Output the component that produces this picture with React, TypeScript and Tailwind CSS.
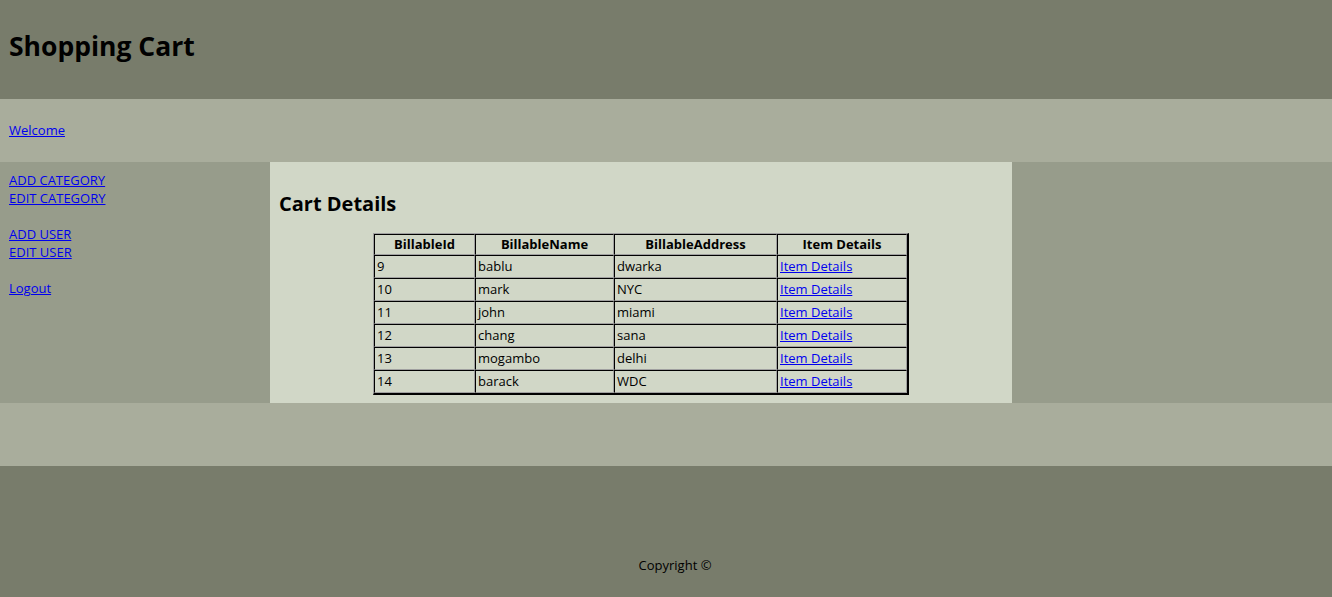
const rows = [
  { id: '9', name: 'bablu', address: 'dwarka' },
  { id: '10', name: 'mark', address: 'NYC' },
  { id: '11', name: 'john', address: 'miami' },
  { id: '12', name: 'chang', address: 'sana' },
  { id: '13', name: 'mogambo', address: 'delhi' },
  { id: '14', name: 'barack', address: 'WDC' },
];

const cell =
  'border border-t-black border-l-black border-r-[#a0a0a0] border-b-[#a0a0a0] px-[2px]';

export default function App() {
  return (
    <div className="w-[1332px] min-h-[597px] text-[13px] text-black font-['Open_Sans',sans-serif]">
      {/* Header */}
      <div className="h-[99px] bg-[#787c6b] flex items-center px-[9px] pb-[5px]">
        <h1 className="text-[26.5px] font-bold">Shopping Cart</h1>
      </div>

      {/* Nav */}
      <div className="h-[63px] bg-[#a9ad9c] flex items-center px-[9px] pt-[1px]">
        <a href="#" className="text-[#0000ee] underline">Welcome</a>
      </div>

      {/* Main */}
      <div className="flex h-[241px]">
        <div className="w-[270px] bg-[#979c8b] px-[9px] pt-[9px] leading-[18px] flex flex-col">
          <a href="#" className="text-[#0000ee] underline self-start">ADD CATEGORY</a>
          <a href="#" className="text-[#0000ee] underline self-start">EDIT CATEGORY</a>
          <div className="h-[18px]" />
          <a href="#" className="text-[#0000ee] underline self-start">ADD USER</a>
          <a href="#" className="text-[#0000ee] underline self-start">EDIT USER</a>
          <div className="h-[18px]" />
          <a href="#" className="text-[#0000ee] underline self-start">Logout</a>
        </div>

        <div className="w-[742px] bg-[#d1d7c7] px-[9px]">
          <h2 className="text-[20px] font-bold mt-[29px] mb-[16px] leading-[26px]">Cart Details</h2>
          <table className="mx-auto w-[536px] table-fixed border-separate border-spacing-0 border-t border-l border-r-2 border-b-2 border-t-[#a0a0a0] border-l-[#a0a0a0] border-r-black border-b-black">
            <thead>
              <tr>
                <th className={`${cell} w-[101px] leading-[19px] font-bold text-center`}>BillableId</th>
                <th className={`${cell} w-[139px] leading-[19px] font-bold text-center`}>BillableName</th>
                <th className={`${cell} w-[163px] leading-[19px] font-bold text-center`}>BillableAddress</th>
                <th className={`${cell} w-[130px] leading-[19px] font-bold text-center`}>Item Details</th>
              </tr>
            </thead>
            <tbody>
              {rows.map((r) => (
                <tr key={r.id}>
                  <td className={`${cell} leading-[21px]`}>{r.id}</td>
                  <td className={`${cell} leading-[21px]`}>{r.name}</td>
                  <td className={`${cell} leading-[21px]`}>{r.address}</td>
                  <td className={`${cell} leading-[21px]`}>
                    <a href="#" className="text-[#0000ee] underline">Item Details</a>
                  </td>
                </tr>
              ))}
            </tbody>
          </table>
        </div>

        <div className="flex-1 bg-[#979c8b]" />
      </div>

      {/* Footer band */}
      <div className="h-[63px] bg-[#a9ad9c]" />

      {/* Footer */}
      <div className="h-[131px] bg-[#787c6b] flex items-end justify-center pb-[22px] pl-[18px]">
        <p>Copyright ©</p>
      </div>
    </div>
  );
}
